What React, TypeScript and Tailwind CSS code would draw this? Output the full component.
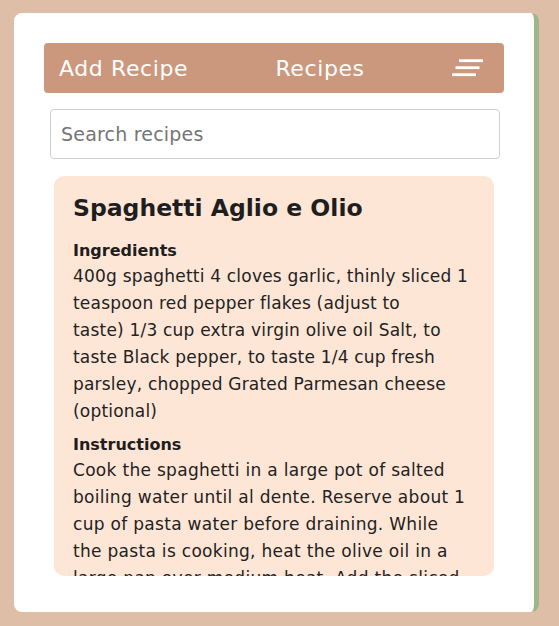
import React from "react";

function MenuIcon() {
  return (
    <svg width="32" height="18" viewBox="0 0 32 18" fill="#ffffff">
      <rect x="7" y="0.3" width="24" height="2.8" />
      <rect x="3.5" y="7.3" width="24" height="2.8" />
      <rect x="0" y="14.3" width="24" height="2.8" />
    </svg>
  );
}

export default function App() {
  return (
    <div className="min-h-[626px] w-full bg-[#dfbea8] pt-[13px] pl-[14px] font-['DejaVu_Sans',sans-serif] text-[#222222]">
      <div className="w-[525px] rounded-[8px] border-r-[5px] border-[#9db68a] bg-white px-[30px] pt-[30px] pb-[36px]">
        <div className="flex h-[50px] items-center justify-between rounded-[4px] bg-[#cc987d] pl-[15px] pr-[20px] text-[22px] tracking-[0.6px] text-white">
          <span>Add Recipe</span>
          <span>Recipes</span>
          <span className="flex items-center">
            <MenuIcon />
          </span>
        </div>
        <input
          type="text"
          placeholder="Search recipes"
          className="mt-[16px] ml-[6px] block h-[50px] w-[450px] rounded-[4px] border border-[#cfcfcf] px-[10px] text-[19px] tracking-[0.2px] outline-none placeholder:text-[#757575]"
        />
        <div className="mt-[17px] ml-[10px] h-[400px] w-[440px] overflow-hidden rounded-[10px] bg-[#fee6d6] px-[19px] pt-[18px]">
          <h2 className="text-[23.5px] font-bold leading-[28px] text-[#1e1e1e]">Spaghetti Aglio e Olio</h2>
          <h3 className="mt-[16px] text-[16px] font-bold leading-[25px] text-[#1e1e1e]">Ingredients</h3>
          <p className="text-[17px] leading-[27px] tracking-[0.2px]">
            400g spaghetti 4 cloves garlic, thinly sliced 1<br />
            teaspoon red pepper flakes (adjust to<br />
            taste) 1/3 cup extra virgin olive oil Salt, to<br />
            taste Black pepper, to taste 1/4 cup fresh<br />
            parsley, chopped Grated Parmesan cheese<br />
            (optional)
          </p>
          <h3 className="mt-[7px] text-[16px] font-bold leading-[25px] text-[#1e1e1e]">Instructions</h3>
          <p className="text-[17px] leading-[27px] tracking-[0.3px]">
            Cook the spaghetti in a large pot of salted<br />
            boiling water until al dente. Reserve about 1<br />
            cup of pasta water before draining. While<br />
            the pasta is cooking, heat the olive oil in a<br />
            large pan over medium heat. Add the sliced
          </p>
        </div>
      </div>
    </div>
  );
}
